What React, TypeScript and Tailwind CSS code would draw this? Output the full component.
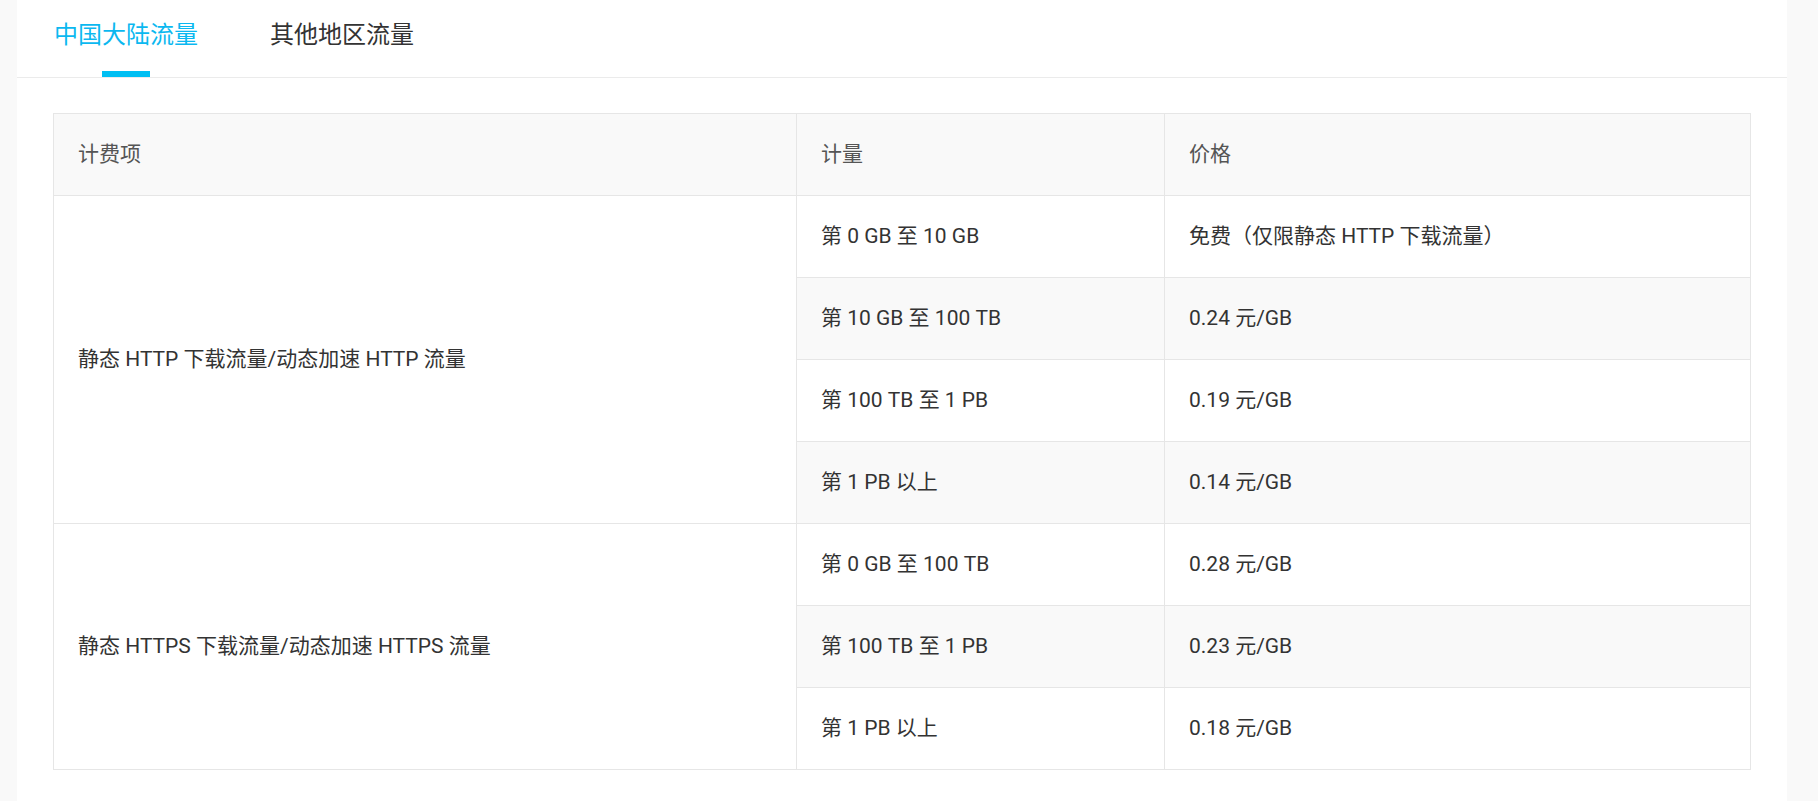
import { useState } from 'react'

type Row = { amount: string; price: string }

type Group = { item: string; rows: Row[] }

const groups: Group[] = [
  {
    item: '静态 HTTP 下载流量/动态加速 HTTP 流量',
    rows: [
      { amount: '第 0 GB 至 10 GB', price: '免费（仅限静态 HTTP 下载流量）' },
      { amount: '第 10 GB 至 100 TB', price: '0.24 元/GB' },
      { amount: '第 100 TB 至 1 PB', price: '0.19 元/GB' },
      { amount: '第 1 PB 以上', price: '0.14 元/GB' },
    ],
  },
  {
    item: '静态 HTTPS 下载流量/动态加速 HTTPS 流量',
    rows: [
      { amount: '第 0 GB 至 100 TB', price: '0.28 元/GB' },
      { amount: '第 100 TB 至 1 PB', price: '0.23 元/GB' },
      { amount: '第 1 PB 以上', price: '0.18 元/GB' },
    ],
  },
]

const tabs = ['中国大陆流量', '其他地区流量']

export default function App() {
  const [active, setActive] = useState(0)

  // zebra stripes run across the whole table, not per group
  let rowIndex = 0

  return (
    <div
      className="min-h-screen bg-[#f9f9f9] pl-[17px] pr-[31px]"
      style={{ fontFamily: 'Roboto, "Noto Sans CJK SC", sans-serif' }}
    >
      <div className="min-h-screen bg-white">
        <div className="flex h-[78px] border-b border-[#ebebeb] pl-px">
          {tabs.map((t, i) => (
            <button
              key={t}
              onClick={() => setActive(i)}
              className={`relative px-9 pb-[8px] text-[24px] leading-[26px] ${
                active === i ? 'text-[#0bb8f0]' : 'text-[#333333]'
              }`}
            >
              {t}
              {active === i && (
                <span className="absolute bottom-0 left-1/2 h-[6px] w-12 -translate-x-1/2 bg-[#00bff3]" />
              )}
            </button>
          ))}
        </div>

        <div className="px-9 pt-[35px]">
          <table className="w-full table-fixed border-collapse text-[21px] text-[#333333]">
            <colgroup>
              <col className="w-[743px]" />
              <col className="w-[368px]" />
              <col />
            </colgroup>
            <thead>
              <tr className="h-[82px] bg-[#f9f9f9] text-[#555555]">
                <th className="border border-[#e6e6e6] px-6 text-left font-normal">计费项</th>
                <th className="border border-[#e6e6e6] px-6 text-left font-normal">计量</th>
                <th className="border border-[#e6e6e6] px-6 text-left font-normal">价格</th>
              </tr>
            </thead>
            <tbody>
              {groups.map((g) =>
                g.rows.map((r, j) => {
                  const striped = rowIndex++ % 2 === 1
                  return (
                    <tr key={g.item + j} className="h-[82px]">
                      {j === 0 && (
                        <td rowSpan={g.rows.length} className="border border-[#e6e6e6] bg-white px-6">
                          {g.item}
                        </td>
                      )}
                      <td className={`border border-[#e6e6e6] px-6 ${striped ? 'bg-[#f9f9f9]' : 'bg-white'}`}>
                        {r.amount}
                      </td>
                      <td className={`border border-[#e6e6e6] px-6 ${striped ? 'bg-[#f9f9f9]' : 'bg-white'}`}>
                        {r.price}
                      </td>
                    </tr>
                  )
                })
              )}
            </tbody>
          </table>
        </div>
      </div>
    </div>
  )
}
